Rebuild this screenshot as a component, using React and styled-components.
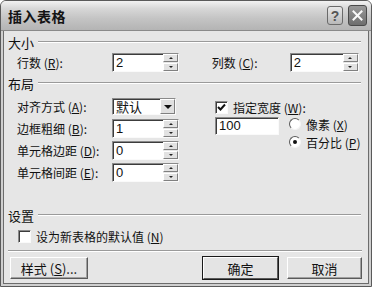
import styled, { createGlobalStyle } from "styled-components";

const GlobalStyle = createGlobalStyle`
  html, body {
    margin: 0;
    padding: 0;
    background: #ffffff;
  }
  body {
    font-family: "Noto Sans CJK SC", "Liberation Sans", sans-serif;
    font-size: 12px;
    color: #111;
  }
`;

const Window = styled.div`
  width: 372px;
  height: 287px;
  box-sizing: border-box;
  border: 1px solid #5a5a5a;
  border-radius: 6px 6px 0 0;
  background: #cfcfcf;
  display: flex;
  flex-direction: column;
  overflow: hidden;
`;

const TitleBar = styled.div`
  height: 29px;
  flex: none;
  display: flex;
  align-items: center;
  padding: 0 4px 0 7px;
  background: linear-gradient(
    180deg,
    #f2f2f2 0%,
    #d8d8d8 25%,
    #c4c4c4 60%,
    #b4b4b4 100%
  );
  border-bottom: 1px solid #8a8a8a;
`;

const Title = styled.div`
  flex: 1;
  font-size: 14px;
  font-weight: 700;
  letter-spacing: 0.5px;
  color: #141414;
`;

const CaptionButton = styled.div`
  width: ${(p) => (p.$close ? 19 : 16)}px;
  height: ${(p) => (p.$close ? 21 : 19)}px;
  margin-left: ${(p) => (p.$close ? 5 : 0)}px;
  box-sizing: border-box;
  border: 1px solid ${(p) => (p.$close ? "#4a4a4a" : "#6a6a6a")};
  border-radius: 3px;
  background: ${(p) =>
    p.$close
      ? "linear-gradient(180deg, #9a9a9a, #6e6e6e)"
      : "linear-gradient(180deg, #e8e8e8, #b8b8b8)"};
  display: flex;
  align-items: center;
  justify-content: center;
  color: ${(p) => (p.$close ? "#f4f4f4" : "#555")};
  font-family: "Liberation Sans", sans-serif;
  font-weight: 700;
  font-size: 14px;
`;

const Body = styled.div`
  flex: 1;
  margin: 0 2px 2px;
  border: 1px solid #6c6c6c;
  border-top: none;
  background: #e6e6e6;
  padding: 0 6px 0 4px;
  display: flex;
  flex-direction: column;
`;

const GroupHeader = styled.div`
  display: flex;
  align-items: center;
  gap: 4px;
  height: 14px;
  margin-top: ${(p) => p.$top}px;
  font-size: 13px;

  &::after {
    content: "";
    flex: 1;
    height: 0;
    border-top: 1px solid #9a9a9a;
    border-bottom: 1px solid #ffffff;
    margin-right: 1px;
  }
`;

const SizeRow = styled.div`
  display: flex;
  align-items: center;
  height: 19px;
  margin-top: 4px;
`;

const Field = styled.div`
  display: flex;
  align-items: center;
  width: ${(p) => p.$width}px;
  padding-left: ${(p) => p.$indent}px;
  box-sizing: border-box;
`;

const Label = styled.span`
  width: ${(p) => p.$width}px;
  flex: none;
  white-space: nowrap;
`;

const Spin = styled.div`
  display: flex;
  height: 19px;
  width: ${(p) => p.$width}px;
  box-sizing: border-box;
  border-top: 1px solid #8a8a8a;
  border-left: 1px solid #8a8a8a;
  border-bottom: 1px solid #fafafa;
  border-right: 1px solid #fafafa;
  box-shadow: inset 1px 1px 0 #3c3c3c;
  background: #fff;
`;

const TextValue = styled.div`
  flex: 1;
  padding-left: 3px;
  line-height: 17px;
  font-size: 13px;
  font-family: "Liberation Sans", sans-serif;
`;

const SpinButtons = styled.div`
  width: 15px;
  display: flex;
  flex-direction: column;
  gap: 1px;
  background: #e6e6e6;
`;

const SpinButton = styled.div`
  flex: 1;
  box-sizing: border-box;
  border: 1px solid;
  border-color: #fff #808080 #808080 #fff;
  background: #e2e2e2;
  display: flex;
  align-items: center;
  justify-content: center;

  &::before {
    content: "";
    border-left: 2px solid transparent;
    border-right: 2px solid transparent;
    ${(p) =>
      p.$down
        ? "border-top: 2px solid #222;"
        : "border-bottom: 2px solid #222;"}
  }
`;

const LayoutArea = styled.div`
  display: flex;
  margin-top: 7px;
`;

const LeftColumn = styled.div`
  width: 203px;
  padding-left: 9px;
  box-sizing: border-box;
  display: flex;
  flex-direction: column;
  gap: 3px;
`;

const FormRow = styled.div`
  display: flex;
  align-items: center;
  height: 19px;
`;

const Select = styled.div`
  width: 64px;
  height: 17px;
  box-sizing: border-box;
  border: 1px solid;
  border-color: #8a8a8a #fafafa #fafafa #8a8a8a;
  box-shadow: inset 1px 1px 0 #3c3c3c;
  background: #fff;
  display: flex;
  align-items: stretch;
  font-size: 13px;
`;

const SelectText = styled.div`
  flex: 1;
  padding-left: 3px;
  line-height: 15px;
`;

const SelectArrow = styled.div`
  width: 15px;
  box-sizing: border-box;
  border: 1px solid;
  border-color: #fff #808080 #808080 #fff;
  background: #e0e0e0;
  display: flex;
  align-items: center;
  justify-content: center;

  &::before {
    content: "";
    border-left: 4px solid transparent;
    border-right: 4px solid transparent;
    border-top: 4px solid #111;
  }
`;

const RightColumn = styled.div`
  display: flex;
  flex-direction: column;
  padding-left: 4px;
`;

const CheckRow = styled.div`
  display: flex;
  align-items: center;
  gap: 5px;
  height: 16px;
  margin-left: ${(p) => p.$indent || 0}px;
  margin-top: ${(p) => p.$top || 0}px;
`;

const Box = styled.div`
  width: 13px;
  height: 13px;
  box-sizing: border-box;
  border: 1px solid;
  border-color: #8a8a8a #fafafa #fafafa #8a8a8a;
  box-shadow: inset 1px 1px 0 #3c3c3c;
  background: #fff;
  display: flex;
  align-items: center;
  justify-content: center;
`;

const WidthRow = styled.div`
  display: flex;
  align-items: flex-start;
  margin-top: 2px;
  gap: 10px;
`;

const WidthInput = styled.div`
  width: 64px;
  height: 18px;
  box-sizing: border-box;
  border: 1px solid;
  border-color: #8a8a8a #fafafa #fafafa #8a8a8a;
  box-shadow: inset 1px 1px 0 #3c3c3c;
  background: #fff;
  padding-left: 3px;
  line-height: 16px;
  font-size: 13px;
  font-family: "Liberation Sans", sans-serif;
`;

const RadioGroup = styled.div`
  display: flex;
  flex-direction: column;
  gap: 2px;
  margin-top: -1px;
`;

const RadioRow = styled.div`
  display: flex;
  align-items: center;
  gap: 5px;
  height: 16px;
`;

const Radio = styled.div`
  width: 12px;
  height: 12px;
  box-sizing: border-box;
  border-radius: 50%;
  border: 1px solid;
  border-color: #5a5a5a #f4f4f4 #f4f4f4 #5a5a5a;
  background: #fff;
  display: flex;
  align-items: center;
  justify-content: center;

  &::before {
    content: "";
    width: 4px;
    height: 4px;
    border-radius: 50%;
    background: ${(p) => (p.$checked ? "#111" : "transparent")};
  }
`;

const Separator = styled.div`
  margin-top: 6px;
  border-top: 1px solid #9a9a9a;
  border-bottom: 1px solid #ffffff;
`;

const ButtonBar = styled.div`
  display: flex;
  align-items: center;
  margin-top: 5px;
  padding-left: 2px;
`;

const Button = styled.div`
  width: ${(p) => p.$width || 75}px;
  height: 22px;
  box-sizing: border-box;
  display: flex;
  align-items: center;
  justify-content: center;
  font-size: 13px;
  background: #e4e4e4;
  border: 1px solid;
  border-color: #ffffff #5a5a5a #5a5a5a #ffffff;
  box-shadow: ${(p) =>
    p.$default ? "0 0 0 1px #1a1a1a" : "inset -1px -1px 0 #a0a0a0"};
  margin-left: ${(p) => p.$gap || 0}px;
`;

const Spacer = styled.div`
  flex: 1;
`;

const Key = ({ k }) => (
  <>
    (<u>{k}</u>)
  </>
);

const SpinBox = ({ value, width }) => (
  <Spin $width={width}>
    <TextValue>{value}</TextValue>
    <SpinButtons>
      <SpinButton />
      <SpinButton $down />
    </SpinButtons>
  </Spin>
);

export default function App() {
  return (
    <>
      <GlobalStyle />
      <Window>
        <TitleBar>
          <Title>插入表格</Title>
          <CaptionButton>?</CaptionButton>
          <CaptionButton $close>
            <svg width="11" height="11" viewBox="0 0 11 11">
              <path
                d="M1.5 1.5 L9.5 9.5 M9.5 1.5 L1.5 9.5"
                stroke="#fafafa"
                strokeWidth="2"
                strokeLinecap="square"
              />
            </svg>
          </CaptionButton>
        </TitleBar>
        <Body>
          <GroupHeader $top={4}>大小</GroupHeader>
          <SizeRow>
            <Field $width={203} $indent={9}>
              <Label $width={95}>
                行数 <Key k="R" />:
              </Label>
              <SpinBox value="2" width={67} />
            </Field>
            <Field $width={157} $indent={4}>
              <Label $width={78}>
                列数 <Key k="C" />:
              </Label>
              <SpinBox value="2" width={69} />
            </Field>
          </SizeRow>

          <GroupHeader $top={4}>布局</GroupHeader>
          <LayoutArea>
            <LeftColumn>
              <FormRow>
                <Label $width={95}>
                  对齐方式 <Key k="A" />:
                </Label>
                <Select>
                  <SelectText>默认</SelectText>
                  <SelectArrow />
                </Select>
              </FormRow>
              <FormRow>
                <Label $width={95}>
                  边框粗细 <Key k="B" />:
                </Label>
                <SpinBox value="1" width={67} />
              </FormRow>
              <FormRow>
                <Label $width={95}>
                  单元格边距 <Key k="D" />:
                </Label>
                <SpinBox value="0" width={67} />
              </FormRow>
              <FormRow>
                <Label $width={95}>
                  单元格间距 <Key k="E" />:
                </Label>
                <SpinBox value="0" width={67} />
              </FormRow>
            </LeftColumn>
            <RightColumn>
              <CheckRow $top={2}>
                <Box>
                  <svg width="9" height="9" viewBox="0 0 9 9">
                    <path
                      d="M1 4 L3.5 6.5 L8 1.5"
                      stroke="#111"
                      strokeWidth="2"
                      fill="none"
                    />
                  </svg>
                </Box>
                <span>
                  指定宽度 <Key k="W" />:
                </span>
              </CheckRow>
              <WidthRow>
                <WidthInput>100</WidthInput>
                <RadioGroup>
                  <RadioRow>
                    <Radio />
                    <span>
                      像素 <Key k="X" />
                    </span>
                  </RadioRow>
                  <RadioRow>
                    <Radio $checked />
                    <span>
                      百分比 <Key k="P" />
                    </span>
                  </RadioRow>
                </RadioGroup>
              </WidthRow>
            </RightColumn>
          </LayoutArea>

          <GroupHeader $top={26}>设置</GroupHeader>
          <CheckRow $indent={10} $top={6}>
            <Box />
            <span>
              设为新表格的默认值 <Key k="N" />
            </span>
          </CheckRow>
          <Separator />
          <ButtonBar>
            <Button $width={78}>
              样式 <Key k="S" />
              ...
            </Button>
            <Spacer />
            <Button $default>确定</Button>
            <Button $gap={9}>取消</Button>
          </ButtonBar>
        </Body>
      </Window>
    </>
  );
}
